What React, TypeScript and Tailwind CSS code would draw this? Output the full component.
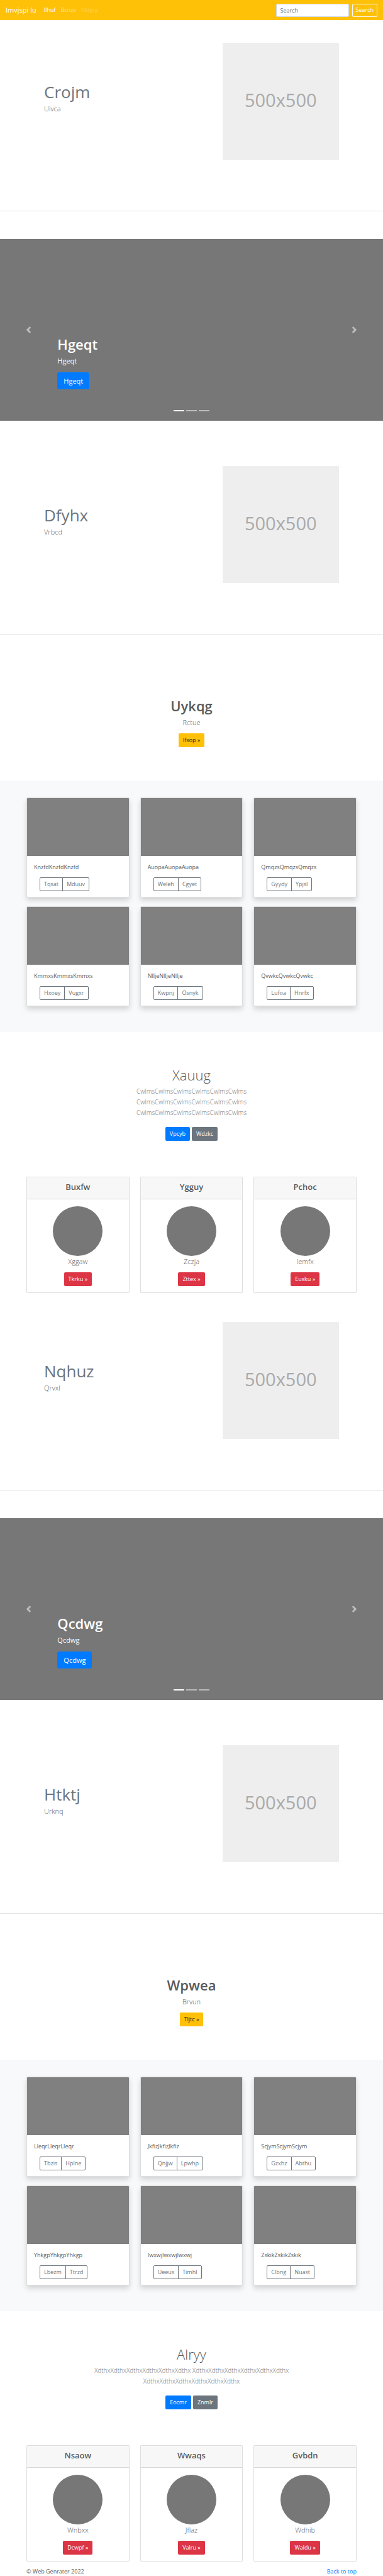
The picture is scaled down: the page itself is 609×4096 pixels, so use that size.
import React from "react";

type FeatureData = { title: string; text: string };
type SlideData = { title: string };
type AlbumCard = { text: string; left: string; right: string };
type PersonCard = { title: string; name: string; action: string };

const albumOne: AlbumCard[] = [
  { text: "KnzfdKnzfdKnzfd", left: "Tqsat", right: "Mduuv" },
  { text: "AuopaAuopaAuopa", left: "Weleh", right: "Cgyet" },
  { text: "QmqzsQmqzsQmqzs", left: "Gyydy", right: "Ypjsl" },
  { text: "KmmxsKmmxsKmmxs", left: "Hxoey", right: "Vugxr" },
  { text: "NlljeNlljeNllje", left: "Kwpnj", right: "Osnyk" },
  { text: "QvwkcQvwkcQvwkc", left: "Lufoa", right: "Hnrfx" },
];

const albumTwo: AlbumCard[] = [
  { text: "LleqrLleqrLleqr", left: "Tbzis", right: "Hplne" },
  { text: "JkfizJkfizJkfiz", left: "Qnjjw", right: "Lpwhp" },
  { text: "ScjymScjymScjym", left: "Gzxhz", right: "Abthu" },
  { text: "YhkgpYhkgpYhkgp", left: "Lbezm", right: "Ttrzd" },
  { text: "IwxwjIwxwjIwxwj", left: "Ueeus", right: "Timhl" },
  { text: "ZskikZskikZskik", left: "Clbng", right: "Nuast" },
];

const peopleOne: PersonCard[] = [
  { title: "Buxfw", name: "Xggaw", action: "Tkrku »" },
  { title: "Ygguy", name: "Zczja", action: "Zttex »" },
  { title: "Pchoc", name: "Iemfx", action: "Eusku »" },
];

const peopleTwo: PersonCard[] = [
  { title: "Nsaow", name: "Wnbxx", action: "Dcwpf »" },
  { title: "Wwaqs", name: "Jflaz", action: "Valru »" },
  { title: "Gvbdn", name: "Wdhib", action: "Waldu »" },
];

function Navbar() {
  return (
    <nav className="flex h-8 items-center bg-[#ffc107] px-[9px] text-[9px] leading-[14px] text-white">
      <a href="#" className="mr-3 text-[11px] leading-4">Imvjspi lu</a>
      <ul className="flex gap-2">
        <li><a href="#">Ilhuf</a></li>
        <li><a href="#" className="text-white/50">Bcnzs</a></li>
        <li><a href="#" className="text-white/25">Mdgrg</a></li>
      </ul>
      <form className="ml-auto flex gap-[5px]" onSubmit={(e) => e.preventDefault()}>
        <input
          type="search"
          aria-label="Search"
          placeholder="Search"
          className="h-[21px] w-[116px] rounded-[2px] border border-[#ced4da] bg-white px-[6px] text-[#495057] placeholder:text-[#6c757d]"
        />
        <button type="submit" className="h-[21px] rounded-[2px] border border-[#f8f9fa] px-[5px] text-[#f8f9fa]">
          Search
        </button>
      </form>
    </nav>
  );
}

function Feature({ title, text }: FeatureData) {
  return (
    <section className="grid grid-cols-12 items-center gap-x-[17px] px-[70px] pb-[81px]">
      <div className="col-span-7 mb-3">
        <h2 className="text-[26px] leading-[34px] text-[#6c757d]">{title}</h2>
        <p className="mt-px text-[11px] leading-[17px] font-light">{text}</p>
      </div>
      <div className="col-span-5 flex h-[186px] items-center justify-center bg-[#eeeeee] pb-1 text-[29px] text-[#aaaaaa]">
        500x500
      </div>
    </section>
  );
}

function Chevron({ flip = false }: { flip?: boolean }) {
  return (
    <svg viewBox="0 0 8 8" fill="#fff" className="size-[11px]" aria-hidden="true">
      {flip ? (
        <path d="M2.75 0l-1.5 1.5 2.5 2.5-2.5 2.5 1.5 1.5 4-4-4-4z" />
      ) : (
        <path d="M5.25 0l-4 4 4 4 1.5-1.5-2.5-2.5 2.5-2.5-1.5-1.5z" />
      )}
    </svg>
  );
}

function Slide({ title }: SlideData) {
  return (
    <section className="relative mt-11 flex h-[289px] flex-col items-start justify-end bg-[#777777] px-[15%] pb-[50px] text-white">
      <h2 className="text-[22px] leading-[27px] font-semibold">{title}</h2>
      <p className="mt-1 text-[11px] leading-[17px]">{title}</p>
      <a href="#" className="mt-[10px] rounded-[3px] bg-[#007bff] px-[10px] py-[5px] text-[11px] leading-[17px]">
        {title}
      </a>
      <button type="button" aria-label="Previous" className="absolute inset-y-0 left-0 flex w-[15%] items-center justify-center opacity-50">
        <Chevron />
      </button>
      <button type="button" aria-label="Next" className="absolute inset-y-0 right-0 flex w-[15%] items-center justify-center opacity-50">
        <Chevron flip />
      </button>
      <div className="absolute inset-x-0 bottom-[15px] flex justify-center gap-[3px]">
        <span className="h-[2px] w-[17px] bg-white" />
        <span className="h-[2px] w-[17px] bg-white/50" />
        <span className="h-[2px] w-[17px] bg-white/50" />
      </div>
    </section>
  );
}

function Hero({ title, text, action }: { title: string; text: string; action: string }) {
  return (
    <section className="flex h-[232px] flex-col items-center pt-[100px]">
      <h1 className="text-[22px] leading-[27px] font-semibold">{title}</h1>
      <p className="mt-1 text-[11px] leading-[17px] font-light">{text}</p>
      <a href="#" className="mt-[9px] rounded-[2px] bg-[#ffc107] px-[7px] py-1 text-[9px] leading-[14px] text-[#212529]">
        {action}
      </a>
    </section>
  );
}

function Album({ cards }: { cards: AlbumCard[] }) {
  const outline = "h-[22px] border border-[#6c757d] px-[6px] text-[9px] leading-[14px] text-[#6c757d]";
  return (
    <section className="h-[400px] bg-[#f8f9fa] px-[42px] pt-[27px]">
      <div className="grid grid-cols-3 gap-x-[17px] gap-y-[14px]">
        {cards.map((card) => (
          <article
            key={card.text}
            className="flex h-[159px] flex-col rounded-[2px] border border-black/13 bg-white shadow-[0_5px_9px_rgba(0,0,0,0.15)]"
          >
            <div className="h-[92px] rounded-t-[1px] bg-[#808080]" />
            <p className="px-[11px] pt-[11px] text-[9px] leading-[14px]">{card.text}</p>
            <div className="mt-[9px] flex px-[20px]">
              <button type="button" className={outline + " rounded-l-[2px]"}>{card.left}</button>
              <button type="button" className={outline + " -ml-px rounded-r-[2px]"}>{card.right}</button>
            </div>
          </article>
        ))}
      </div>
    </section>
  );
}

function Intro({ title, lines, primary, secondary }: { title: string; lines: string[]; primary: string; secondary: string }) {
  const button = "rounded-[2px] px-[7px] py-1 text-[9px] leading-[14px] text-white";
  return (
    <section className="flex flex-col items-center pt-[55px] pb-[57px] text-center">
      <h1 className="text-[22px] leading-[27px] font-light">{title}</h1>
      <div className="mt-1 text-[10px] leading-[17px] font-light text-[#6c757d]">
        {lines.map((line, i) => (
          <p key={i}>{line}</p>
        ))}
      </div>
      <div className="mt-[14px] flex gap-[3px]">
        <a href="#" className={button + " bg-[#007bff]"}>{primary}</a>
        <a href="#" className={button + " bg-[#6c757d]"}>{secondary}</a>
      </div>
    </section>
  );
}

function People({ cards }: { cards: PersonCard[] }) {
  return (
    <section className="grid grid-cols-3 gap-x-[17px] px-[42px]">
      {cards.map((card) => (
        <article key={card.title} className="flex h-[185px] flex-col items-center rounded-[2px] border border-black/13 bg-white">
          <h3 className="h-[35px] w-full border-b border-black/13 bg-[#f7f7f7] pt-[7px] text-center text-[13px] leading-4 font-semibold">
            {card.title}
          </h3>
          <div className="mt-[11px] size-[79px] rounded-full bg-[#777777]" />
          <p className="text-[11px] leading-[17px] font-light">{card.name}</p>
          <a href="#" className="mt-[9px] rounded-[2px] bg-[#dc3545] px-[7px] py-1 text-[9px] leading-[14px] text-white">
            {card.action}
          </a>
        </article>
      ))}
    </section>
  );
}

export default function App() {
  return (
    <div className="bg-white font-['Open_Sans','Noto_Sans',sans-serif] text-[#5a5a5a]">
      <Navbar />
      <main>
        <div className="pt-9">
          <Feature title="Crojm" text="Uivca" />
        </div>
        <hr className="border-black/10" />
        <Slide title="Hgeqt" />
        <div className="pt-[72px]">
          <Feature title="Dfyhx" text="Vrbcd" />
        </div>
        <hr className="border-black/10" />
        <Hero title="Uykqg" text="Rctue" action="Ifsop »" />
        <Album cards={albumOne} />
        <Intro
          title="Xauug"
          lines={["CwlmsCwlmsCwlmsCwlmsCwlmsCwlms", "CwlmsCwlmsCwlmsCwlmsCwlmsCwlms", "CwlmsCwlmsCwlmsCwlmsCwlmsCwlms"]}
          primary="Vpcyb"
          secondary="Wdzkc"
        />
        <People cards={peopleOne} />
        <div className="pt-[46px]">
          <Feature title="Nqhuz" text="Qrvxl" />
        </div>
        <hr className="border-black/10" />
        <Slide title="Qcdwg" />
        <div className="pt-[72px]">
          <Feature title="Htktj" text="Urknq" />
        </div>
        <hr className="border-black/10" />
        <Hero title="Wpwea" text="Brvun" action="Tljtc »" />
        <Album cards={albumTwo} />
        <Intro
          title="Alryy"
          lines={["XdthxXdthxXdthxXdthxXdthxXdthx XdthxXdthxXdthxXdthxXdthxXdthx", "XdthxXdthxXdthxXdthxXdthxXdthx"]}
          primary="Eocmr"
          secondary="Znmlr"
        />
        <People cards={peopleTwo} />
      </main>
      <footer className="flex justify-between px-[42px] pt-[9px] text-[9px] leading-[14px]">
        <p>© Web Genrater 2022</p>
        <a href="#" className="text-[#007bff]">Back to top</a>
      </footer>
    </div>
  );
}
